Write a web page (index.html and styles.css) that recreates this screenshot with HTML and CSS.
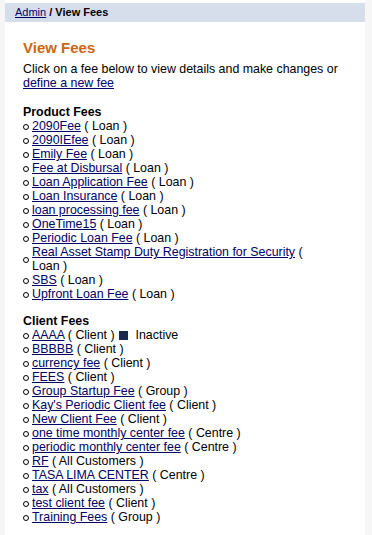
FILE: index.html
```html
<!DOCTYPE html>
<html>
<head>
<meta charset="utf-8">
<link rel="stylesheet" href="styles.css">
</head>
<body>
<div class="page">
  <div class="crumb"><a href="#">Admin</a> <b>/ View Fees</b></div>
  <div class="content">
    <h1>View Fees</h1>
    <p class="intro">Click on a fee below to view details and make changes or <a href="#">define a new fee</a></p>

    <h2>Product Fees</h2>
    <ul class="fees">
      <li><span class="dot"></span><span class="txt"><a href="#">2090Fee</a> ( Loan )</span></li>
      <li><span class="dot"></span><span class="txt"><a href="#">2090IEfee</a> ( Loan )</span></li>
      <li><span class="dot"></span><span class="txt"><a href="#">Emily Fee</a> ( Loan )</span></li>
      <li><span class="dot"></span><span class="txt"><a href="#">Fee at Disbursal</a> ( Loan )</span></li>
      <li><span class="dot"></span><span class="txt"><a href="#">Loan Application Fee</a> ( Loan )</span></li>
      <li><span class="dot"></span><span class="txt"><a href="#">Loan Insurance</a> ( Loan )</span></li>
      <li><span class="dot"></span><span class="txt"><a href="#">loan processing fee</a> ( Loan )</span></li>
      <li><span class="dot"></span><span class="txt"><a href="#">OneTime15</a> ( Loan )</span></li>
      <li><span class="dot"></span><span class="txt"><a href="#">Periodic Loan Fee</a> ( Loan )</span></li>
      <li><span class="dot"></span><span class="txt"><a href="#">Real Asset Stamp Duty Registration for Security</a> ( Loan )</span></li>
      <li><span class="dot"></span><span class="txt"><a href="#">SBS</a> ( Loan )</span></li>
      <li><span class="dot"></span><span class="txt"><a href="#">Upfront Loan Fee</a> ( Loan )</span></li>
    </ul>

    <h2 class="second">Client Fees</h2>
    <ul class="fees">
      <li><span class="dot"></span><span class="txt"><a href="#">AAAA</a> ( Client ) <span class="inactive-box"></span> Inactive</span></li>
      <li><span class="dot"></span><span class="txt"><a href="#">BBBBB</a> ( Client )</span></li>
      <li><span class="dot"></span><span class="txt"><a href="#">currency fee</a> ( Client )</span></li>
      <li><span class="dot"></span><span class="txt"><a href="#">FEES</a> ( Client )</span></li>
      <li><span class="dot"></span><span class="txt"><a href="#">Group Startup Fee</a> ( Group )</span></li>
      <li><span class="dot"></span><span class="txt"><a href="#">Kay's Periodic Client fee</a> ( Client )</span></li>
      <li><span class="dot"></span><span class="txt"><a href="#">New Client Fee</a> ( Client )</span></li>
      <li><span class="dot"></span><span class="txt"><a href="#">one time monthly center fee</a> ( Centre )</span></li>
      <li><span class="dot"></span><span class="txt"><a href="#">periodic monthly center fee</a> ( Centre )</span></li>
      <li><span class="dot"></span><span class="txt"><a href="#">RF</a> ( All Customers )</span></li>
      <li><span class="dot"></span><span class="txt"><a href="#">TASA LIMA CENTER</a> ( Centre )</span></li>
      <li><span class="dot"></span><span class="txt"><a href="#">tax</a> ( All Customers )</span></li>
      <li><span class="dot"></span><span class="txt"><a href="#">test client fee</a> ( Client )</span></li>
      <li><span class="dot"></span><span class="txt"><a href="#">Training Fees</a> ( Group )</span></li>
    </ul>
  </div>
</div>
</body>
</html>
```
FILE: styles.css
```css
html, body {
  margin: 0;
  padding: 0;
  background: #f6f6f6;
}
body {
  font-family: "Liberation Sans", Arial, Helvetica, sans-serif;
  font-size: 12.4px;
  color: #000;
}
.page {
  margin: 0 7px 0 5px;
  background: #fff;
  min-height: 535px;
  padding-top: 3px;
}
a {
  color: #000066;
  text-decoration: underline;
}
.crumb {
  background: #d7deeb;
  height: 19px;
  line-height: 19px;
  padding-left: 10px;
  font-size: 11px;
}
.crumb b {
  font-weight: bold;
}
.content {
  padding: 0 0 0 18px;
  width: 318px;
}
h1 {
  margin: 17px 0 0 0;
  font-size: 15px;
  line-height: 18px;
  color: #cc6611;
  font-weight: bold;
}
.intro {
  margin: 5px 0 0 0;
  line-height: 14px;
}
h2 {
  margin: 15px 0 0 0;
  font-size: 12.4px;
  line-height: 14px;
  font-weight: bold;
}
h2.second {
  margin-top: 13px;
}
.fees {
  list-style: none;
  margin: 0;
  padding: 0;
  width: 290px;
}
.fees li {
  display: flex;
  align-items: center;
  line-height: 14px;
}
.dot {
  flex: none;
  width: 4px;
  height: 4px;
  border: 1px solid #000;
  border-radius: 50%;
  margin: 1px 3px 0 0;
}
.txt {
  flex: 1;
}
.inactive-box {
  display: inline-block;
  width: 9px;
  height: 9px;
  background: #1a2a4a;
  vertical-align: -1px;
  margin: 0 4px 0 1px;
}
```
